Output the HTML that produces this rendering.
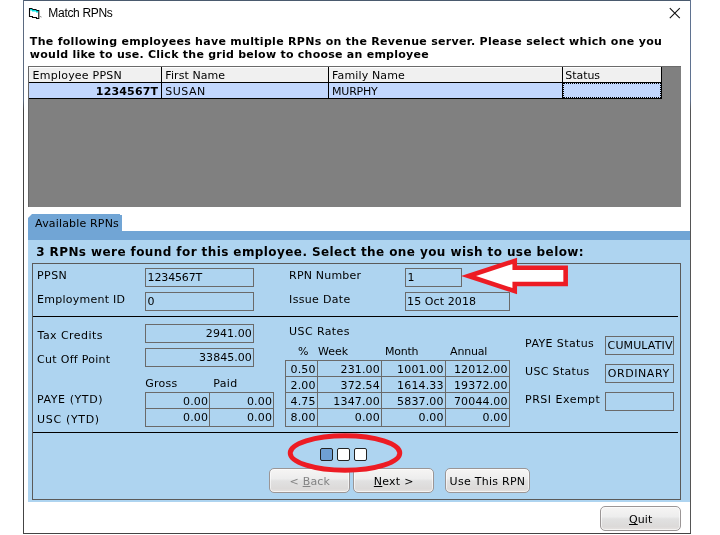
<!DOCTYPE html>
<html><head><meta charset="utf-8"><title>Match RPNs</title>
<style>
html,body{margin:0;padding:0;background:#fff;}
body{width:720px;height:535px;position:relative;overflow:hidden;font-family:"DejaVu Sans","Liberation Sans",sans-serif;font-size:11px;color:#000;}
.a{position:absolute;white-space:nowrap;}
.t{position:absolute;white-space:nowrap;line-height:14px;color:#000;}
.T{font-family:"Liberation Sans",sans-serif;font-size:12px;}
.R{font-family:"DejaVu Sans","Liberation Sans",sans-serif;font-size:11px;}
.B{font-family:"DejaVu Sans","Liberation Sans",sans-serif;font-size:11px;font-weight:bold;}
.H{font-family:"DejaVu Sans","Liberation Sans",sans-serif;font-size:12px;font-weight:bold;}
.in{position:absolute;border:1px solid #6a6a6a;box-sizing:border-box;height:19px;overflow:hidden;}
.btn{position:absolute;box-sizing:border-box;border:1px solid #9b9696;border-radius:5px;background:linear-gradient(#f6f5f4,#ededed 42%,#e1e1e1 52%,#dcdad9 85%,#e6e2e0);height:25px;box-shadow:inset 0 0 0 1px rgba(255,255,255,.6);}
.dot{position:absolute;box-sizing:border-box;border:1px solid #222;border-radius:2px;width:13px;height:13px;top:448px;background:#fff;}
#root{position:absolute;left:0;top:0;width:720px;height:535px;will-change:transform;}
</style></head><body><div id="root">
<!-- window borders -->
<div class="a" style="left:23px;top:0;width:668px;height:1px;background:#4a5a6e"></div>
<div class="a" style="left:23px;top:0;width:1px;height:534px;background:linear-gradient(#5b6a80 0,#5b6a80 100px,#444 110px,#444)"></div>
<div class="a" style="left:690px;top:0;width:1px;height:534px;background:linear-gradient(#5f7290 0,#5f7290 100px,#555 110px,#555)"></div>
<div class="a" style="left:23px;top:533px;width:668px;height:1px;background:#444"></div>

<!-- title icon + close -->
<svg class="a" style="left:28px;top:6px" width="16" height="14" viewBox="0 0 16 14"><path d="M1.5 2.5 L4 2.5 L4 3.5 L8 3.5 L8 4.5 L10.8 4.5 L10.8 12.5 L8.5 12.5 L8.5 11.5 L4.5 11.5 L4.5 10.5 L1.5 10.5 Z" fill="#fff" stroke="#0a0a0a" stroke-width="1.1"/><path d="M2.1 3.8h2.2M4 4.8h4.3M8 5.8h2.2" stroke="#00e0e0" stroke-width="1.5" fill="none"/><path d="M11.8 10.3l1.8 0.8" stroke="#8a8a8a" stroke-width="1" fill="none"/></svg>
<svg class="a" style="left:669.3px;top:6.9px" width="12" height="12" viewBox="0 0 12 12"><path d="M0.8 1.2l10 10M10.8 1.2l-10 10" stroke="#111" stroke-width="1.1" fill="none"/></svg>

<!-- grid -->
<div class="a" style="left:28px;top:66px;width:653px;height:141px;background:#808080;box-sizing:border-box;border-top:1px solid #6b6b6b;border-left:1px solid #666;"></div>
<div class="a" style="left:29px;top:67px;width:633px;height:16px;background:#f0f0f0;border-top:1px solid #fff;box-sizing:border-box;"></div>
<div class="a" style="left:29px;top:83px;width:633px;height:15px;background:#c2d7fd;"></div>
<div class="a" style="left:29px;top:82px;width:633px;height:1px;background:#000;"></div>
<div class="a" style="left:29px;top:98px;width:633px;height:1px;background:#000;"></div>
<div class="a" style="left:161px;top:67px;width:1px;height:31px;background:#000;"></div>
<div class="a" style="left:328px;top:67px;width:1px;height:31px;background:#000;"></div>
<div class="a" style="left:562px;top:67px;width:1px;height:31px;background:#000;"></div>
<div class="a" style="left:661px;top:67px;width:1px;height:32px;background:#000;"></div>
<div class="a" style="left:563px;top:83px;width:98px;height:15px;box-sizing:border-box;border:1px dotted #000;"></div>

<!-- tab + panel -->
<div class="a" style="left:28px;top:231px;width:662px;height:9px;background:#71a5d5;"></div>
<div class="a" style="left:28px;top:240px;width:662px;height:262px;background:#aed4f0;"></div>
<div class="a" style="left:28px;top:214px;width:94px;height:18px;background:#71a5d5;clip-path:polygon(0 4px,4px 0,92px 0,92px 1px,94px 1px,94px 18px,0 18px);"></div>

<!-- frame -->
<div class="a" style="left:32px;top:263px;width:649px;height:237px;border:1px solid #5a5a5a;box-sizing:border-box;"></div>
<div class="a" style="left:33px;top:316px;width:645px;height:1px;background:#000;"></div>
<div class="a" style="left:33px;top:432px;width:645px;height:1px;background:#000;"></div>

<!-- inputs -->
<div class="in" style="left:145px;top:268px;width:109px;"></div>
<div class="in" style="left:145px;top:292px;width:109px;"></div>
<div class="in" style="left:405px;top:268px;width:57px;"></div>
<div class="in" style="left:405px;top:292px;width:105px;"></div>
<div class="in" style="left:145px;top:324px;width:109px;"></div>
<div class="in" style="left:145px;top:348px;width:109px;"></div>
<div class="in" style="left:145px;top:392px;width:65px;height:17px;"></div>
<div class="in" style="left:209px;top:392px;width:65px;height:17px;"></div>
<div class="in" style="left:145px;top:408px;width:65px;"></div>
<div class="in" style="left:209px;top:408px;width:65px;"></div>
<div class="in" style="left:605px;top:336px;width:69px;"></div>
<div class="in" style="left:605px;top:364px;width:69px;"></div>
<div class="in" style="left:605px;top:392px;width:69px;"></div>

<!-- USC table -->
<div class="in" style="left:285px;top:360px;width:33px;height:17px;"></div>
<div class="in" style="left:317px;top:360px;width:65px;height:17px;"></div>
<div class="in" style="left:381px;top:360px;width:65px;height:17px;"></div>
<div class="in" style="left:445px;top:360px;width:65px;height:17px;"></div>
<div class="in" style="left:285px;top:376px;width:33px;height:17px;"></div>
<div class="in" style="left:317px;top:376px;width:65px;height:17px;"></div>
<div class="in" style="left:381px;top:376px;width:65px;height:17px;"></div>
<div class="in" style="left:445px;top:376px;width:65px;height:17px;"></div>
<div class="in" style="left:285px;top:392px;width:33px;height:17px;"></div>
<div class="in" style="left:317px;top:392px;width:65px;height:17px;"></div>
<div class="in" style="left:381px;top:392px;width:65px;height:17px;"></div>
<div class="in" style="left:445px;top:392px;width:65px;height:17px;"></div>
<div class="in" style="left:285px;top:408px;width:33px;"></div>
<div class="in" style="left:317px;top:408px;width:65px;"></div>
<div class="in" style="left:381px;top:408px;width:65px;"></div>
<div class="in" style="left:445px;top:408px;width:65px;"></div>

<!-- arrow -->
<svg class="a" style="left:455px;top:250px" width="120" height="52" viewBox="0 0 120 52"><path d="M13.5 26 L59.75 10.9 L59.75 17.8 L110.65 17.8 L110.65 34 L59.75 34 L59.75 41.1 Z" fill="#fff" stroke="#ed1c24" stroke-width="4.6" stroke-linejoin="miter"/></svg>

<!-- dots + ellipse -->
<div class="dot" style="left:320px;background:#6fa0d5;"></div>
<div class="dot" style="left:337px;"></div>
<div class="dot" style="left:354px;"></div>


<!-- buttons -->
<div class="btn" style="left:269px;top:468px;width:81px;"></div>
<div class="btn" style="left:353px;top:468px;width:81px;"></div>
<div class="btn" style="left:445px;top:468px;width:85px;"></div>
<div class="btn" style="left:600px;top:506px;width:81px;height:25px;"></div>

<div class="t T" style="left:48.35px;top:6.00px;letter-spacing:-0.317px;">Match RPNs</div>
<div class="t B" style="left:29.85px;top:35.00px;letter-spacing:0.298px;">The following employees have multiple RPNs on the Revenue server. Please select which one you</div>
<div class="t B" style="left:29.85px;top:48.00px;letter-spacing:0.252px;">would like to use. Click the grid below to choose an employee</div>
<div class="t R" style="left:32.60px;top:69.00px;letter-spacing:0.221px;">Employee PPSN</div>
<div class="t R" style="left:165.35px;top:69.00px;letter-spacing:0.072px;">First Name</div>
<div class="t R" style="left:332.10px;top:69.00px;letter-spacing:0.140px;">Family Name</div>
<div class="t R" style="left:565.35px;top:69.00px;letter-spacing:-0.070px;">Status</div>
<div class="t B" style="left:95.85px;top:85.00px;letter-spacing:0.164px;">1234567T</div>
<div class="t R" style="left:165.35px;top:85.00px;letter-spacing:0.475px;">SUSAN</div>
<div class="t R" style="left:332.10px;top:85.00px;letter-spacing:-0.220px;">MURPHY</div>
<div class="t R" style="left:35.10px;top:217.00px;letter-spacing:0.165px;">Available RPNs</div>
<div class="t H" style="left:36.20px;top:244.50px;letter-spacing:0.415px;">3 RPNs were found for this employee. Select the one you wish to use below:</div>
<div class="t R" style="left:37.10px;top:269.00px;letter-spacing:0.383px;">PPSN</div>
<div class="t R" style="left:37.10px;top:293.00px;letter-spacing:0.242px;">Employment ID</div>
<div class="t R" style="left:147.60px;top:271.00px;letter-spacing:-0.143px;">1234567T</div>
<div class="t R" style="left:147.60px;top:295.00px;">0</div>
<div class="t R" style="left:289.10px;top:269.00px;letter-spacing:0.183px;">RPN Number</div>
<div class="t R" style="left:289.10px;top:293.00px;letter-spacing:0.322px;">Issue Date</div>
<div class="t R" style="left:407.60px;top:271.00px;">1</div>
<div class="t R" style="left:407.10px;top:295.00px;letter-spacing:0.090px;">15 Oct 2018</div>
<div class="t R" style="left:37.60px;top:329.00px;letter-spacing:0.440px;">Tax Credits</div>
<div class="t R" style="left:37.10px;top:353.00px;letter-spacing:0.283px;">Cut Off Point</div>
<div class="t R" style="left:205.85px;top:327.00px;letter-spacing:0.067px;">2941.00</div>
<div class="t R" style="left:199.10px;top:351.00px;letter-spacing:0.021px;">33845.00</div>
<div class="t R" style="left:145.35px;top:376.50px;letter-spacing:0.238px;">Gross</div>
<div class="t R" style="left:213.35px;top:376.50px;letter-spacing:0.300px;">Paid</div>
<div class="t R" style="left:37.10px;top:393.00px;letter-spacing:0.567px;">PAYE (YTD)</div>
<div class="t R" style="left:37.10px;top:413.00px;letter-spacing:0.663px;">USC (YTD)</div>
<div class="t R" style="left:289.10px;top:324.50px;letter-spacing:0.394px;">USC Rates</div>
<div class="t R" style="left:297.90px;top:344.50px;">%</div>
<div class="t R" style="left:318.10px;top:344.50px;letter-spacing:-0.033px;">Week</div>
<div class="t R" style="left:385.10px;top:344.50px;letter-spacing:-0.275px;">Month</div>
<div class="t R" style="left:450.10px;top:344.50px;letter-spacing:-0.220px;">Annual</div>
<div class="t R" style="left:525.10px;top:336.50px;letter-spacing:0.390px;">PAYE Status</div>
<div class="t R" style="left:525.10px;top:365.00px;letter-spacing:0.322px;">USC Status</div>
<div class="t R" style="left:525.10px;top:392.50px;letter-spacing:0.490px;">PRSI Exempt</div>
<div class="t R" style="left:607.60px;top:339.00px;letter-spacing:0.125px;">CUMULATIV</div>
<div class="t R" style="left:607.80px;top:367.00px;letter-spacing:0.564px;">ORDINARY</div>
<div class="t R" style="left:289.60px;top:475.00px;letter-spacing:0.180px;color:#838383;">&lt; <u>B</u>ack</div>
<div class="t R" style="left:373.85px;top:475.00px;letter-spacing:0.230px;"><u>N</u>ext &gt;</div>
<div class="t R" style="left:449.60px;top:475.00px;letter-spacing:0.264px;">Use This RPN</div>
<div class="t R" style="left:629.00px;top:513.00px;letter-spacing:0.100px;"><u>Q</u>uit</div>
<div class="t R" style="left:290.55px;top:362.50px;letter-spacing:0.150px;">0.50</div>
<div class="t R" style="left:340.50px;top:362.50px;letter-spacing:0.150px;">231.00</div>
<div class="t R" style="left:397.10px;top:362.50px;letter-spacing:0.150px;">1001.00</div>
<div class="t R" style="left:453.95px;top:362.50px;letter-spacing:0.150px;">12012.00</div>
<div class="t R" style="left:290.55px;top:378.50px;letter-spacing:0.150px;">2.00</div>
<div class="t R" style="left:340.50px;top:378.50px;letter-spacing:0.150px;">372.54</div>
<div class="t R" style="left:397.10px;top:378.50px;letter-spacing:0.150px;">1614.33</div>
<div class="t R" style="left:453.95px;top:378.50px;letter-spacing:0.150px;">19372.00</div>
<div class="t R" style="left:290.55px;top:394.50px;letter-spacing:0.150px;">4.75</div>
<div class="t R" style="left:333.35px;top:394.50px;letter-spacing:0.150px;">1347.00</div>
<div class="t R" style="left:397.10px;top:394.50px;letter-spacing:0.150px;">5837.00</div>
<div class="t R" style="left:453.95px;top:394.50px;letter-spacing:0.150px;">70044.00</div>
<div class="t R" style="left:290.55px;top:410.50px;letter-spacing:0.150px;">8.00</div>
<div class="t R" style="left:354.80px;top:410.50px;letter-spacing:0.150px;">0.00</div>
<div class="t R" style="left:418.55px;top:410.50px;letter-spacing:0.150px;">0.00</div>
<div class="t R" style="left:482.55px;top:410.50px;letter-spacing:0.150px;">0.00</div>
<div class="t R" style="left:183.05px;top:394.50px;letter-spacing:0.150px;">0.00</div>
<div class="t R" style="left:246.95px;top:394.50px;letter-spacing:0.150px;">0.00</div>
<div class="t R" style="left:183.05px;top:410.50px;letter-spacing:0.150px;">0.00</div>
<div class="t R" style="left:246.95px;top:410.50px;letter-spacing:0.150px;">0.00</div>
<svg class="a" style="left:280px;top:428px" width="130" height="50" viewBox="0 0 130 50"><ellipse cx="65" cy="25" rx="54.8" ry="17.25" fill="none" stroke="#ed1c24" stroke-width="4.9"/></svg>
</div></body></html>
